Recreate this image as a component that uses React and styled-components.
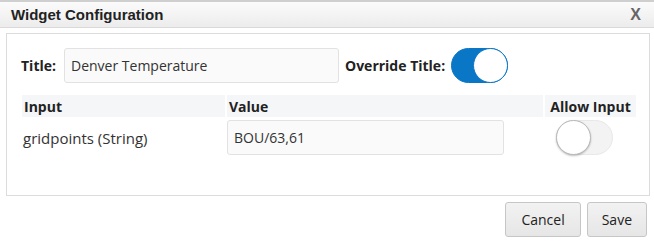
import React from 'react';
import styled, { createGlobalStyle } from 'styled-components';

const GlobalStyle = createGlobalStyle`
  body {
    margin: 0;
    background: #fff;
    font-family: "Open Sans", "Liberation Sans", sans-serif;
    color: #333;
  }
`

const Dialog = styled.div`
  width: 654px;
  height: 246px;
  background: #fff;
`

const Header = styled.div`
  display: flex;
  align-items: center;
  justify-content: space-between;
  height: 25px;
  padding: 0 13px 0 11px;
  border-top: 2px solid #cfcfcf;
  border-bottom: 1px solid #d9d9d9;
  background: linear-gradient(#fbfbfb, #ececec);
`

const HeaderTitle = styled.h1`
  margin: 0;
  font-family: "Liberation Sans", Arial, sans-serif;
  font-size: 15px;
  font-weight: bold;
  color: #222;
`

const Close = styled.span`
  font-family: "Liberation Sans", Arial, sans-serif;
  font-size: 16px;
  font-weight: bold;
  color: #666;
`

const Panel = styled.div`
  margin: 5px 4px 0 6px;
  height: 163px;
  border: 1px solid #dcdcdc;
  padding: 14px 13px 0 14px;
  box-sizing: border-box;
`

const TitleRow = styled.div`
  display: flex;
  align-items: center;
  height: 35px;
`

const Label = styled.span`
  font-size: 14px;
  font-weight: bold;
  color: #222;
  margin-right: ${p => p.$gap || 6}px;
`

const TextBox = styled.div`
  width: ${p => p.$width}px;
  height: 35px;
  box-sizing: border-box;
  display: flex;
  align-items: center;
  padding-left: 6px;
  font-size: 14px;
  color: #333;
  background: #fafafa;
  border: 1px solid #e2e2e2;
  border-radius: 3px;
  margin-right: ${p => p.$after || 0}px;
`

const Toggle = styled.div`
  position: relative;
  width: 57px;
  height: 35px;
  box-sizing: border-box;
  border-radius: 18px;
  background: ${p => (p.$on ? '#0a76c6' : '#f3f3f3')};
  border: 1px solid ${p => (p.$on ? '#0a76c6' : '#e8e8e8')};

  &::after {
    content: '';
    position: absolute;
    top: -1px;
    ${p => (p.$on ? 'right: -1px;' : 'left: -1px;')}
    width: 33px;
    height: 33px;
    border-radius: 50%;
    background: #fff;
    border: 1px solid ${p => (p.$on ? '#0a76c6' : '#b8b8b8')};
    box-shadow: ${p => (p.$on ? 'none' : '0 1px 2px rgba(0,0,0,0.25)')};
  }
`

const Table = styled.div`
  display: grid;
  grid-template-columns: 203px 316px 91px;
  column-gap: 2px;
  row-gap: 3px;
  margin: 12px 0 0 1px;
`

const HeadCell = styled.div`
  height: 22px;
  display: flex;
  align-items: center;
  justify-content: ${p => (p.$center ? 'center' : 'flex-start')};
  padding-left: ${p => (p.$center ? 0 : 2)}px;
  background: #f5f6f8;
  font-size: 14px;
  font-weight: bold;
  color: #222;
`

const Cell = styled.div`
  height: 35px;
  display: flex;
  align-items: center;
  padding-left: ${p => p.$pad || 0}px;
  font-size: 15px;
  color: #333;
`

const Footer = styled.div`
  display: flex;
  justify-content: flex-end;
  gap: 6px;
  margin: 6px 7px 0 0;
`

const Button = styled.button`
  height: 35px;
  padding: 0 ${p => p.$pad}px;
  font-family: "Open Sans", "Liberation Sans", sans-serif;
  font-size: 14px;
  color: #222;
  background: linear-gradient(#f2f2f2, #e6e6e6);
  border: 1px solid #c6c6c6;
  border-radius: 3px;
`

export default function App() {
  return (
    <>
      <GlobalStyle />
      <Dialog>
        <Header>
          <HeaderTitle>Widget Configuration</HeaderTitle>
          <Close>X</Close>
        </Header>
        <Panel>
          <TitleRow>
            <Label $gap={8}>Title:</Label>
            <TextBox $width={275} $after={6}>Denver Temperature</TextBox>
            <Label $gap={6}>Override Title:</Label>
            <Toggle $on />
          </TitleRow>
          <Table>
            <HeadCell>Input</HeadCell>
            <HeadCell>Value</HeadCell>
            <HeadCell $center>Allow Input</HeadCell>
            <Cell $pad={1}>gridpoints (String)</Cell>
            <Cell>
              <TextBox $width={277}>BOU/63,61</TextBox>
            </Cell>
            <Cell $pad={11}>
              <Toggle />
            </Cell>
          </Table>
        </Panel>
        <Footer>
          <Button $pad={15}>Cancel</Button>
          <Button $pad={14}>Save</Button>
        </Footer>
      </Dialog>
    </>
  );
}
